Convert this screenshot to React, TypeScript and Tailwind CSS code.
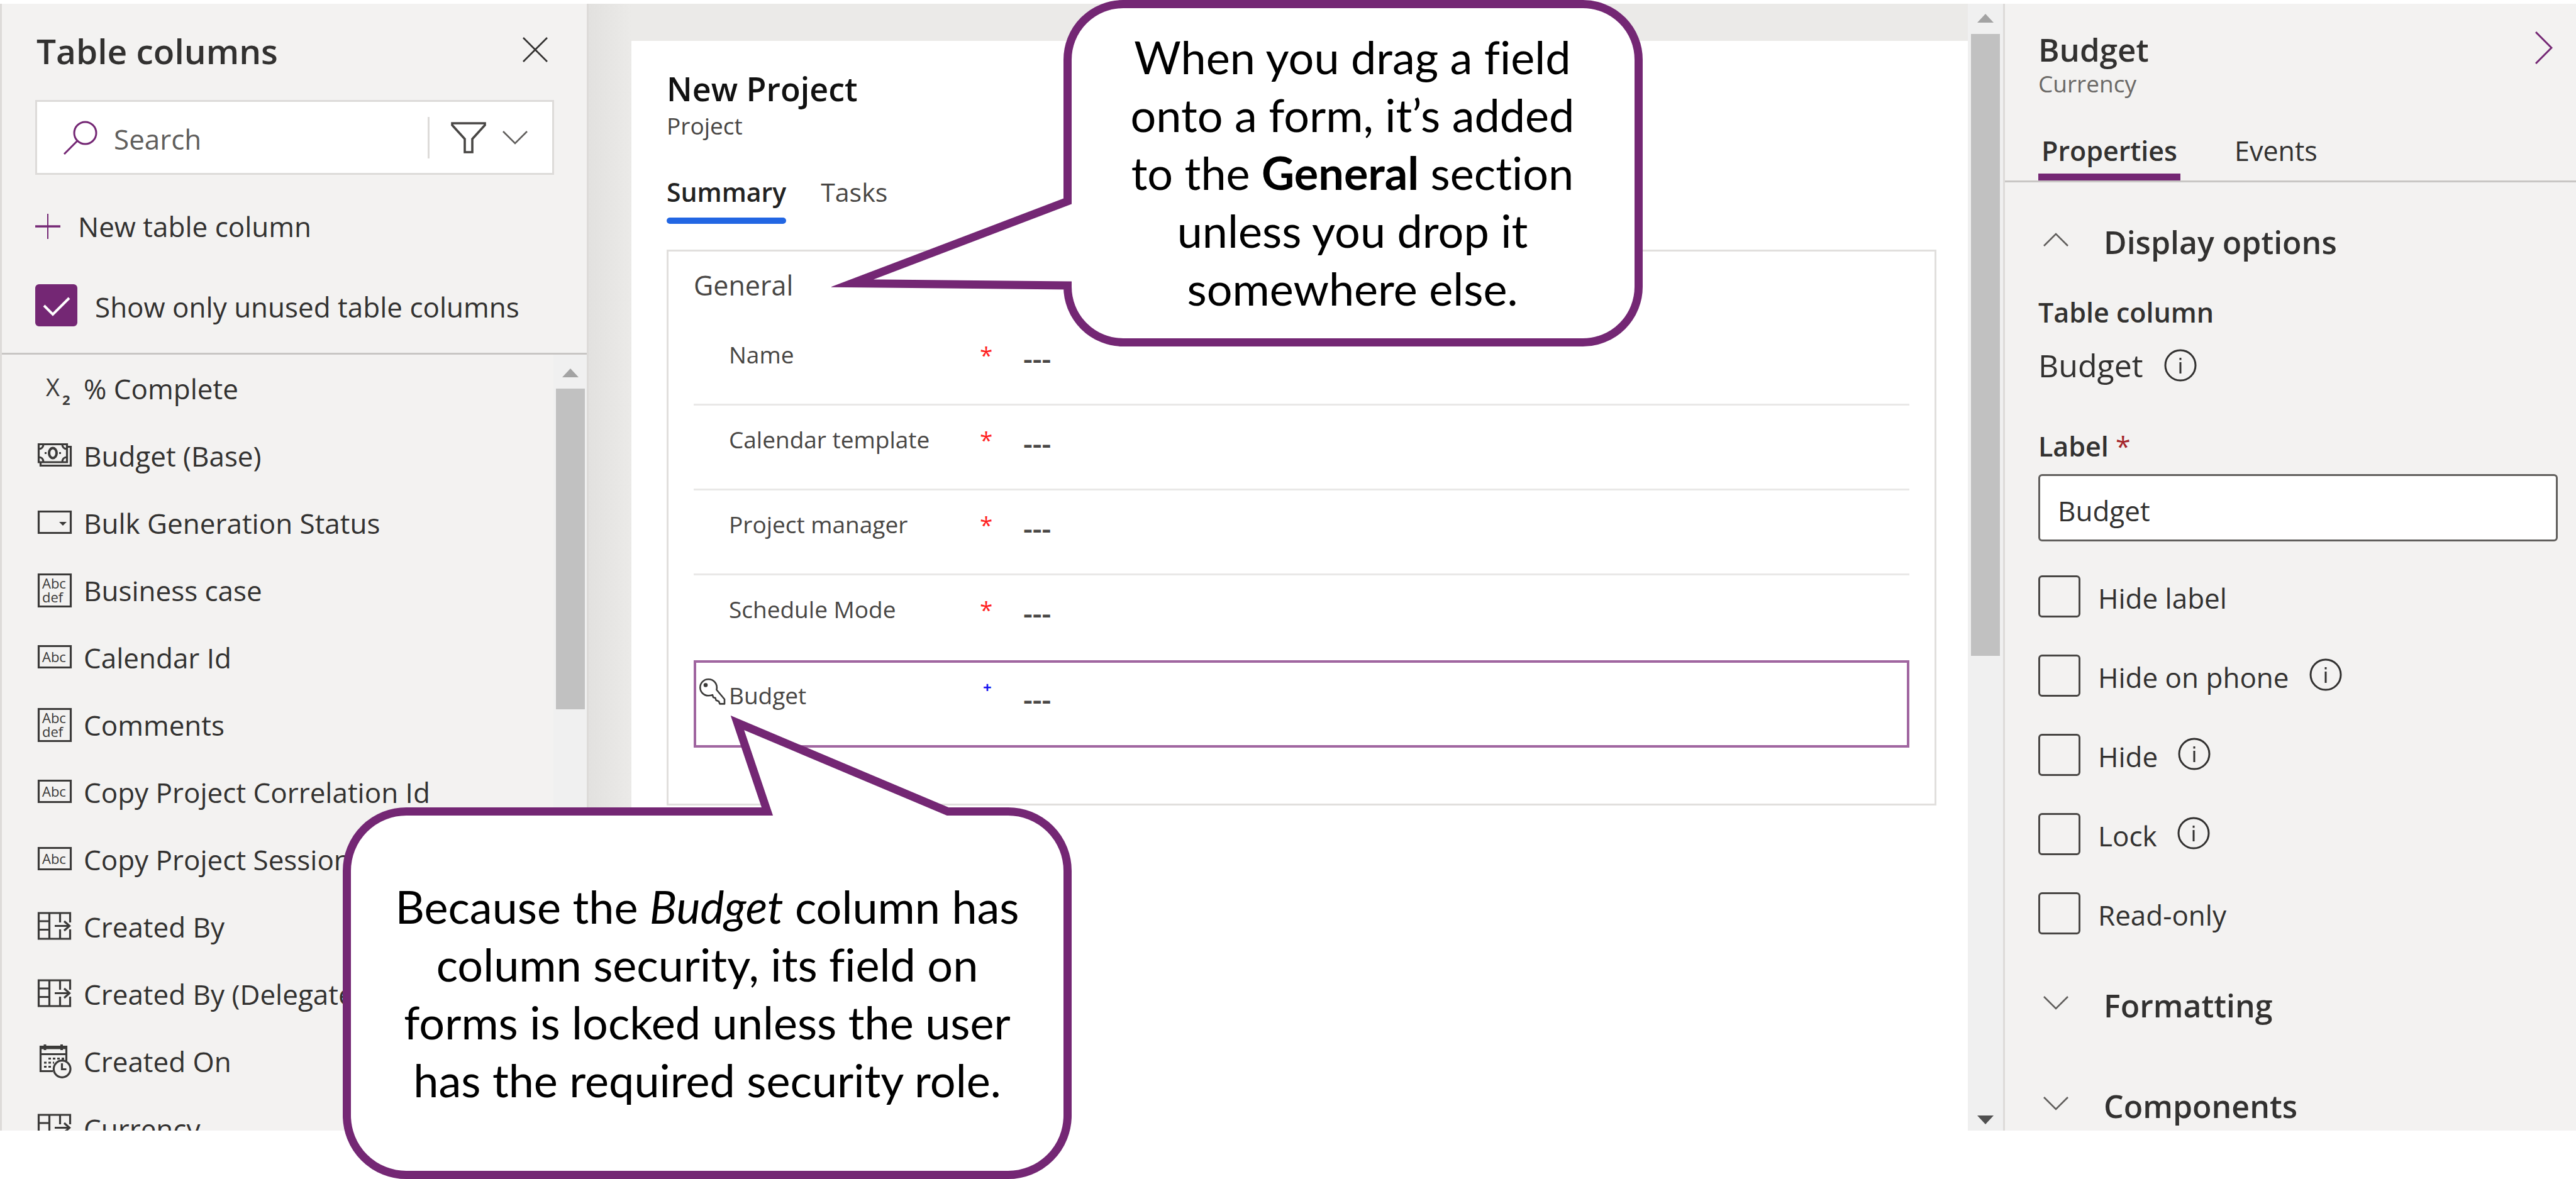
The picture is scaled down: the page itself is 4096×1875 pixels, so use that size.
import { useState } from "react";
import type { ReactNode } from "react";

const FILL = "none";

function CloseIcon() {
  return (
    <svg viewBox="0 0 40 40" className="size-10" fill={FILL} stroke="#323130" strokeWidth="2.600" aria-hidden="true">
      <path d="M1 1 39 39M39 1 1 39" />
    </svg>
  );
}

function SearchIcon() {
  return (
    <svg viewBox="0 0 54 54" className="size-[54px] shrink-0" fill={FILL} stroke="#742774" strokeWidth="3" aria-hidden="true">
      <circle cx="34.5" cy="19.5" r="17.5" />
      <path d="M22 32 1 53" />
    </svg>
  );
}

function FilterIcon() {
  return (
    <svg viewBox="0 0 56 52" className="h-[52px] w-14" fill={FILL} stroke="#484644" strokeWidth="3.600" aria-hidden="true">
      <path d="M2 3H54V6L34 28V49H22V28L2 6Z" />
    </svg>
  );
}

function Chevron({ up = false, className = "" }: { up?: boolean; className?: string }) {
  return (
    <svg viewBox="0 0 40 22" className={"h-[22px] w-10 shrink-0 " + className} fill={FILL} stroke="#605e5c" strokeWidth="2.600" aria-hidden="true">
      <path d={up ? "M1 21 20 2 39 21" : "M1 1 20 20 39 1"} />
    </svg>
  );
}

function InfoIcon() {
  return (
    <svg viewBox="0 0 52 52" className="size-[52px]" fill={FILL} stroke="#323130" strokeWidth="3" aria-hidden="true">
      <circle cx="26" cy="26" r="24" />
      <path d="M26 21V39M26 14V17.5" />
    </svg>
  );
}

type IconKind = "formula" | "money" | "choice" | "multi" | "text" | "lookup" | "date";

function ColumnIcon({ kind }: { kind: IconKind }) {
  const art: Record<IconKind, ReactNode> = {
    formula: (
      <g fill="#3b3a39" stroke="none" fontFamily="Open Sans, sans-serif">
        <text x="13" y="39" fontSize="38">X</text>
        <text x="39" y="53" fontSize="22" fontWeight="700">2</text>
      </g>
    ),
    money: (
      <>
        <path d="M1.5 8.5H46.5V37H1.5Z" />
        <path d="M47 12.5H52.5V42.5H4.5V38" />
        <path d="M1.5 16C6 16 9 13 9 8.5M46.5 16C42 16 39 13 39 8.5M1.5 29C6 29 9 32 9 37M46.5 29C42 29 39 32 39 37" />
        <ellipse cx="24" cy="22.5" rx="6" ry="8" strokeWidth="4" />
        <path d="M11 22.5H14M34 22.5H37" />
      </>
    ),
    choice: (
      <>
        <path d="M1.5 8.5H52.5V42.5H1.5Z" />
        <path d="M34 25H46L40 31Z" fill="#3b3a39" stroke="none" />
      </>
    ),
    multi: (
      <>
        <path d="M1.5 1.5H52.5V52.5H1.5Z" />
        <g fill="#3b3a39" stroke="none" fontFamily="Open Sans, sans-serif" fontSize="22">
          <text x="7" y="24">Abc</text>
          <text x="7" y="46">def</text>
        </g>
      </>
    ),
    text: (
      <>
        <path d="M1.5 8.5H52.5V42.5H1.5Z" />
        <text x="7" y="34" fill="#3b3a39" stroke="none" fontFamily="Open Sans, sans-serif" fontSize="22">Abc</text>
      </>
    ),
    lookup: (
      <>
        <path d="M51.5 20V5H1.500V46H51.5V31" />
        <path d="M18.5 5V46M1.500 18H18.5M1.500 31.5H18.5M35.5 5V20M35.5 31V46" />
        <path d="M27 25.500H50M42 18 50.5 25.500 42 33" />
      </>
    ),
    date: (
      <>
        <path d="M24 42.500H4.500V3.500H45.500V26M4.500 15.500H45.500" />
        <path d="M4.500 5.500H45.500M11.500 0V9M38 0V9" strokeWidth="4" />
        <path d="M17 22.500H42M10 29H26M10 35.500H22" strokeDasharray="4 3" />
        <circle cx="38.700" cy="39" r="13.300" />
        <path d="M38.500 30V39.500H45.500" />
      </>
    ),
  };
  return (
    <svg viewBox="0 0 54 54" className="size-[54px] shrink-0 overflow-visible" fill={FILL} stroke="#3b3a39" strokeWidth="3.200" aria-hidden="true">
      {art[kind]}
    </svg>
  );
}

const columns: { name: string; kind: IconKind }[] = [
  { name: "% Complete", kind: "formula" },
  { name: "Budget (Base)", kind: "money" },
  { name: "Bulk Generation Status", kind: "choice" },
  { name: "Business case", kind: "multi" },
  { name: "Calendar Id", kind: "text" },
  { name: "Comments", kind: "multi" },
  { name: "Copy Project Correlation Id", kind: "text" },
  { name: "Copy Project Session Id", kind: "text" },
  { name: "Created By", kind: "lookup" },
  { name: "Created By (Delegate)", kind: "lookup" },
  { name: "Created On", kind: "date" },
  { name: "Currency", kind: "lookup" },
];

function CheckBox({ label, defaultChecked = false, info = false }: { label: string; defaultChecked?: boolean; info?: boolean }) {
  const [checked, setChecked] = useState(defaultChecked);
  return (
    <div className="flex items-center">
      <label className="flex items-center gap-7">
        <span className="grid">
          <input
            type="checkbox"
            checked={checked}
            onChange={(e) => setChecked(e.target.checked)}
            className="col-start-1 row-start-1 size-[67px] appearance-none rounded-md border-3 border-[#484644] checked:border-[#742774] checked:bg-[#742774]"
          />
          {checked && (
            <svg viewBox="0 0 67 67" className="pointer-events-none col-start-1 row-start-1 size-[67px]" fill={FILL} stroke="#fff" strokeWidth="4" aria-hidden="true">
              <path d="M14 34 28 48 54 22" />
            </svg>
          )}
        </span>
        <span className="pt-1 text-[44px] leading-[60px]">{label}</span>
      </label>
      {info && (
        <button type="button" aria-label={"About " + label} className="ml-8 pb-1">
          <InfoIcon />
        </button>
      )}
    </div>
  );
}

function TableColumnsPanel() {
  return (
    <aside className="flex w-[936px] shrink-0 flex-col border-x-3 border-[#dddbd9] bg-[#f3f2f1]">
      <div className="flex flex-col pr-[52px] pl-[53px]">
        <div className="flex items-center justify-between pt-[43px] pl-[2px]">
          <h2 className="text-[55px] leading-16 font-semibold">Table columns</h2>
          <button type="button" aria-label="Close" className="mr-[10px] pb-1">
            <CloseIcon />
          </button>
        </div>
        <div className="mt-[46px] flex h-[119px] items-center border-3 border-[#dddbd9] bg-white pr-[39px] pl-[42px]">
          <SearchIcon />
          <input
            type="search"
            aria-label="Search"
            placeholder="Search"
            className="ml-[26px] min-w-0 flex-1 pt-1 text-[44px] leading-[60px] outline-none placeholder:text-[#605e5c]"
          />
          <span className="h-[66px] w-[3px] bg-[#dddbd9]" />
          <button type="button" aria-label="Filter" className="ml-[34px] flex items-center gap-[26px]">
            <FilterIcon />
            <Chevron />
          </button>
        </div>
        <button type="button" className="mt-[52px] flex items-center gap-7 self-start text-[44px] leading-[60px]">
          <svg viewBox="0 0 40 40" className="size-10" fill={FILL} stroke="#742774" aria-hidden="true">
            <path d="M0 20H40" strokeWidth="3.500" />
            <path d="M20 0V40" strokeWidth="2" />
          </svg>
          New table column
        </button>
        <div className="mt-[62px] mb-[42px]">
          <CheckBox label="Show only unused table columns" defaultChecked />
        </div>
      </div>
      <div className="flex min-h-0 flex-1 border-t-3 border-[#c8c6c4]">
        <ul className="min-w-0 flex-1 overflow-hidden pl-[57px]">
          {columns.map((c) => (
            <li key={c.name} className="flex h-[107px] items-center gap-[19px] whitespace-nowrap text-[44px] leading-[60px]">
              <ColumnIcon kind={c.kind} />
              {c.name}
            </li>
          ))}
        </ul>
        <div className="flex w-[53px] flex-col items-center bg-[#f0f0f0] pt-[22px]">
          <svg viewBox="0 0 26 14" className="h-[14px] w-[26px]" fill="#a3a3a3" aria-hidden="true">
            <path d="M13 0 26 14H0Z" />
          </svg>
          <div className="mt-[18px] h-[510px] w-[46px] bg-[#c1c1c1]" />
        </div>
      </div>
    </aside>
  );
}

function FieldRow({ label }: { label: string }) {
  return (
    <div className="flex h-[135px] border-b-3 border-[#e9e8e7] pt-[29px] pl-14 text-[37px] leading-[50px] text-[#484644] last:border-0">
      <span className="w-[399px]">{label}</span>
      <span className="w-[69px] text-[#ff1f1f]">*</span>
      <span className="pt-[5px] text-[46px] font-semibold">---</span>
    </div>
  );
}

function FormCanvas() {
  return (
    <main className="flex min-w-0 flex-1 bg-[#ebeae8]">
      <div className="w-[68px] shrink-0 bg-linear-to-r from-[#e2e1df] to-[#ebeae8]" />
      <div className="flex min-w-0 flex-1 flex-col pt-[59px]">
        <div className="flex-1 bg-white pt-[42px] pr-[50px] pl-[56px]">
          <h1 className="text-[52px] leading-[68px] font-semibold text-[#111]">New Project</h1>
          <p className="text-[37px] leading-[50px] text-[#484644]">Project</p>
          <div role="tablist" className="mt-[50px] flex gap-[55px] text-[41px] leading-[60px]">
            <button type="button" role="tab" aria-selected="true" className="flex flex-col gap-[11px] font-semibold text-[#222]">
              Summary
              <span className="h-[10px] w-full rounded-full bg-[#2266e3]" />
            </button>
            <button type="button" role="tab" aria-selected="false" className="self-start text-[#484644]">
              Tasks
            </button>
          </div>
          <section className="mt-[41px] border-3 border-[#e1dfdd] px-10 pt-6 pb-[89px]">
            <h2 className="mb-[26px] text-[43px] leading-[60px] text-[#484644]">General</h2>
            <div>
              <FieldRow label="Name" />
              <FieldRow label="Calendar template" />
              <FieldRow label="Project manager" />
              <FieldRow label="Schedule Mode" />
            </div>
            <div className="flex h-[139px] border-4 border-[#a066a0] pt-[27px] pl-1 text-[37px] leading-[50px] text-[#484644]">
              <svg viewBox="0 0 42 42" className="mr-[6px] h-[42px] w-[42px] overflow-visible" fill={FILL} stroke="#3b3a39" strokeWidth="2.600" strokeLinejoin="round" aria-hidden="true">
                <path d="M28.400 16C30.500 6.500 24 -0.700 15.300 -0.700C8 -0.700 2.300 5.300 2.300 12.300C2.300 19.500 8 25.300 15.300 25.300C18 25.300 20 24.800 22 24.200L23 28L26.500 29L27.500 32.500L32 34.500L33.500 38.400H41V31Z" />
                <circle cx="11" cy="8.500" r="2" fill="#3b3a39" />
              </svg>
              <span className="w-[399px]">Budget</span>
              <span className="w-[69px] pl-[5px] text-[24px] leading-6 font-bold text-[#1515f0]">+</span>
              <span className="pt-[5px] text-[46px] font-semibold">---</span>
            </div>
          </section>
        </div>
      </div>
      <div className="flex w-14 shrink-0 flex-col items-center bg-[#f0f0f0] pt-4 pb-[10px]">
        <svg viewBox="0 0 26 14" className="h-[14px] w-[26px]" fill="#a3a3a3" aria-hidden="true">
          <path d="M13 0 26 14H0Z" />
        </svg>
        <div className="mt-[18px] h-[989px] w-[46px] bg-[#c1c1c1]" />
        <svg viewBox="0 0 26 14" className="mt-auto h-[14px] w-[26px]" fill="#505050" aria-hidden="true">
          <path d="M0 0H26L13 14Z" />
        </svg>
      </div>
    </main>
  );
}

function SectionHeading({ title, open = false }: { title: string; open?: boolean }) {
  return (
    <button type="button" aria-expanded={open} className="ml-2 flex items-center gap-14 text-[50px] leading-[70px] font-semibold">
      <Chevron up={open} className="mb-2" />
      {title}
    </button>
  );
}

function PropertiesPanel() {
  return (
    <aside className="w-[911px] shrink-0 overflow-hidden border-l-3 border-[#dddbd9] bg-[#f3f2f1]">
      <div className="flex items-start justify-between pt-10 pr-[29px] pl-[53px]">
        <div>
          <h2 className="text-[51px] leading-16 font-semibold">Budget</h2>
          <p className="text-[37px] leading-[46px] text-[#6b6967]">Currency</p>
        </div>
        <button type="button" aria-label="Collapse panel" className="mt-1 mr-2">
          <svg viewBox="0 0 28 52" className="h-[52px] w-7" fill={FILL} stroke="#742774" strokeWidth="3" aria-hidden="true">
            <path d="M1 1 26 26 1 51" />
          </svg>
        </button>
      </div>
      <div role="tablist" className="mt-[59px] flex items-start gap-[86px] border-b-3 border-[#c8c6c4] pl-[53px] text-[43px] leading-[50px]">
        <button type="button" role="tab" aria-selected="true" className="border-b-11 border-[#742774] px-[5px] pb-[11px] font-semibold">
          Properties
        </button>
        <button type="button" role="tab" aria-selected="false">
          Events
        </button>
      </div>
      <div className="pt-15 pr-[29px] pl-[53px]">
        <SectionHeading title="Display options" open />
        <h3 className="mt-[47px] text-[43px] leading-[60px] font-semibold">Table column</h3>
        <div className="mt-[19px] flex items-center gap-[33px] text-[50px] leading-[70px]">
          Budget
          <button type="button" aria-label="About table column">
            <InfoIcon />
          </button>
        </div>
        <label htmlFor="field-label" className="mt-[64px] block text-[43px] leading-[60px] font-semibold">
          Label <span className="font-normal text-[#a4262c]">*</span>
        </label>
        <input
          id="field-label"
          defaultValue="Budget"
          className="mt-[14px] h-[107px] w-full rounded-md border-3 border-[#605e5c] bg-white px-7 pt-2 text-[44px] outline-none"
        />
        <div className="mt-[54px] flex flex-col gap-[59px] [&>*]:h-[67px]">
          <CheckBox label="Hide label" />
          <CheckBox label="Hide on phone" info />
          <CheckBox label="Hide" info />
          <CheckBox label="Lock" info />
          <CheckBox label="Read-only" />
        </div>
        <div className="mt-[78px] flex flex-col gap-[90px]">
          <SectionHeading title="Formatting" />
          <SectionHeading title="Components" />
        </div>
      </div>
    </aside>
  );
}

function Callouts() {
  return (
    <>
      <div className="absolute top-0 left-[1322px] h-[551px] w-[1290px]">
        <svg viewBox="0 0 1290 551" className="absolute inset-0 size-full" fill="#fff" stroke="#742774" strokeWidth="13" strokeMiterlimit="20" aria-hidden="true">
          <path d="M375.500 95A88.500 88.500 0 0 1 464 6.500H1195A88.500 88.500 0 0 1 1283.500 95V456A88.500 88.500 0 0 1 1195 544.500H464A88.500 88.500 0 0 1 375.500 456V454L33 450.500L375.500 320Z" />
        </svg>
        <p className="relative ml-[367px] pt-[44px] text-center font-['Lato',sans-serif] text-[72px] leading-[92px] text-black [font-variant-ligatures:none]">
          When you drag a field
          <br />
          onto a form, it’s added
          <br />
          to the <b>General</b> section
          <br />
          unless you drop it
          <br />
          somewhere else.
        </p>
      </div>
      <div className="absolute top-[1138px] left-[545px] h-[737px] w-[1159px]">
        <svg viewBox="0 0 1159 737" className="absolute inset-0 size-full" fill="#fff" stroke="#742774" strokeWidth="13" strokeMiterlimit="20" aria-hidden="true">
          <path d="M6.500 247A94.500 94.500 0 0 1 101 152.500H675L627.500 11.500L962 152.500H1058A94.500 94.500 0 0 1 1152.500 247V636A94.500 94.500 0 0 1 1058 730.500H101A94.500 94.500 0 0 1 6.500 636Z" />
        </svg>
        <p className="relative pt-[257px] text-center font-['Lato',sans-serif] text-[72px] leading-[92px] text-black [font-variant-ligatures:none]">
          Because the <i>Budget</i> column has
          <br />
          column security, its field on
          <br />
          forms is locked unless the user
          <br />
          has the required security role.
        </p>
      </div>
    </>
  );
}

export default function App() {
  return (
    <div className="relative flex h-screen overflow-hidden bg-white pt-[6px] pb-[77px] font-['Open_Sans',sans-serif] text-[#323130]">
      <TableColumnsPanel />
      <FormCanvas />
      <PropertiesPanel />
      <Callouts />
    </div>
  );
}
